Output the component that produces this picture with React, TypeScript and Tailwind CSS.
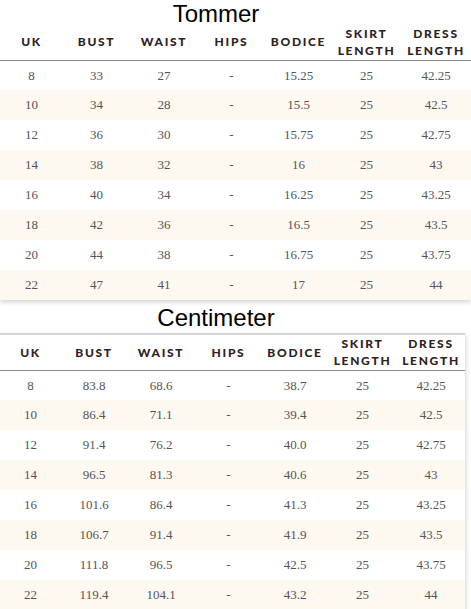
const headers: string[][] = [
  ["UK"],
  ["BUST"],
  ["WAIST"],
  ["HIPS"],
  ["BODICE"],
  ["SKIRT", "LENGTH"],
  ["DRESS", "LENGTH"],
];

const inches = [
  ["8", "33", "27", "-", "15.25", "25", "42.25"],
  ["10", "34", "28", "-", "15.5", "25", "42.5"],
  ["12", "36", "30", "-", "15.75", "25", "42.75"],
  ["14", "38", "32", "-", "16", "25", "43"],
  ["16", "40", "34", "-", "16.25", "25", "43.25"],
  ["18", "42", "36", "-", "16.5", "25", "43.5"],
  ["20", "44", "38", "-", "16.75", "25", "43.75"],
  ["22", "47", "41", "-", "17", "25", "44"],
];

const cms = [
  ["8", "83.8", "68.6", "-", "38.7", "25", "42.25"],
  ["10", "86.4", "71.1", "-", "39.4", "25", "42.5"],
  ["12", "91.4", "76.2", "-", "40.0", "25", "42.75"],
  ["14", "96.5", "81.3", "-", "40.6", "25", "43"],
  ["16", "101.6", "86.4", "-", "41.3", "25", "43.25"],
  ["18", "106.7", "91.4", "-", "41.9", "25", "43.5"],
  ["20", "111.8", "96.5", "-", "42.5", "25", "43.75"],
  ["22", "119.4", "104.1", "-", "43.2", "25", "44"],
];

interface TableProps {
  rows: string[][];
  widths: number[];
  headerHeight: string;
}

function SizeTable({ rows, widths, headerHeight }: TableProps) {
  return (
    <table className="table-fixed border-collapse w-full">
      <colgroup>
        {widths.map((w, i) => (
          <col key={i} style={{ width: w }} />
        ))}
      </colgroup>
      <thead>
        <tr className={`${headerHeight} border-b border-[#8c8c8c]`}>
          {headers.map((h, i) => (
            <th
              key={i}
              className="p-0 text-center align-middle font-['Lato',sans-serif] font-black text-[12px] leading-[17px] tracking-[0.14em] text-[#2e221f]"
            >
              {h.map((line) => (
                <div key={line}>{line}</div>
              ))}
            </th>
          ))}
        </tr>
      </thead>
      <tbody>
        {rows.map((r, i) => (
          <tr key={i} className={`h-[30px] ${i % 2 === 1 ? "bg-[#fdf8f0]" : "bg-white"}`}>
            {r.map((c, j) => (
              <td
                key={j}
                className="p-0 text-center align-middle font-['Liberation_Serif',serif] text-[13px] text-[#555]"
              >
                {c}
              </td>
            ))}
          </tr>
        ))}
      </tbody>
    </table>
  );
}

export default function App() {
  return (
    <div className="w-[471px] h-[609px] overflow-hidden bg-white">
      <div className="shadow-[0_2px_5px_rgba(0,0,0,0.18)]">
        <div className="h-[24px] pr-[39px] text-center font-['Liberation_Sans',Arial,sans-serif] text-[24px] leading-[27px] text-black">
          Tommer
        </div>
        <SizeTable rows={inches} widths={[63, 67, 68, 67, 67, 69, 70]} headerHeight="h-[36px]" />
      </div>
      <div className="mt-[4px] h-[24px] pr-[39px] text-center font-['Liberation_Sans',Arial,sans-serif] text-[24px] leading-[27px] text-black">
        Centimeter
      </div>
      <div className="mt-[5px] w-[465px] border-t-2 border-[#d4d4d4] shadow-[1px_2px_4px_rgba(0,0,0,0.18)]">
        <SizeTable rows={cms} widths={[61, 66, 68, 67, 66, 69, 68]} headerHeight="h-[35px]" />
      </div>
    </div>
  );
}
